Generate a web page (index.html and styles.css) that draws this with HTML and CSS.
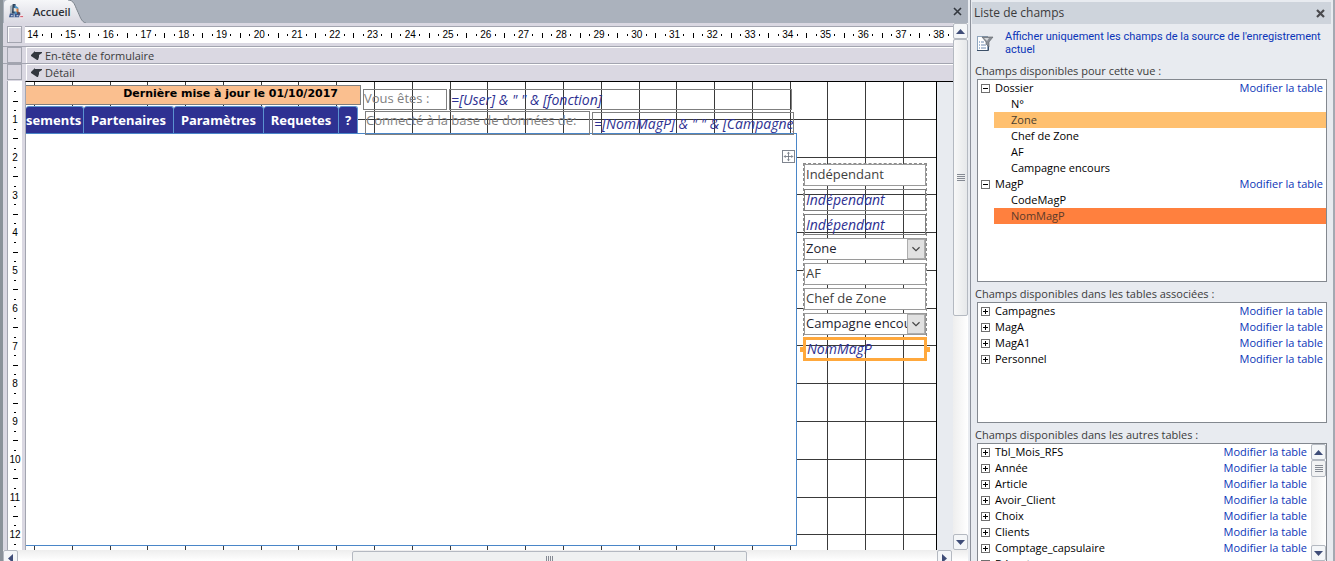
FILE: index.html
```html
<!DOCTYPE html>
<html lang="fr">
<head>
<meta charset="utf-8">
<title>Accueil</title>
<link rel="stylesheet" href="styles.css">
</head>
<body>
<main class="designer">
  <div class="tabbar">
    <div class="tab">
      <svg class="tab-shape" viewBox="0 0 82 23" aria-hidden="true">
        <defs><linearGradient id="tabfill" x1="0" y1="0" x2="0" y2="1"><stop offset="0" stop-color="#f6f7f9"/><stop offset="1" stop-color="#dad9e2"/></linearGradient></defs>
        <path d="M0 23V4Q0 0 4 0H64C70 0 71 6 73 10C76 16 77 22 82 23Z" fill="url(#tabfill)"/>
        <path d="M64 0C70 0 71 6 73 10C76 16 77 22 82 23" fill="none" stroke="#7d858e"/>
      </svg>
      <svg class="tab-icon" viewBox="0 0 16 16" aria-hidden="true">
        <path d="M1 2l4-2 1 10-5 2z" fill="#a9b3bd"/><path d="M4 0h3v10H3z" fill="#2f4660"/><path d="M6 1l4 3v7H6z" fill="#4d94c8"/><path d="M5 4l4 1v3H5z" fill="#e9e0d6"/><path d="M8 5h2v4H8z" fill="#e07b39"/><path d="M9 8l3 1v3H8z" fill="#5b4a58"/><path d="M1 10l11 1v3H0z" fill="#3b568c"/><path d="M2 12h2v1H2zM5 11h1v3H5zM8 12h2v1H8z" fill="#dfe6f0"/><circle cx="13" cy="13.500" r="2.200" fill="#f1e3e8"/><path d="M12 13h3v1h-3z" fill="#d0485c"/>
      </svg>
      <span>Accueil</span>
    </div>
    <button class="close" aria-label="Fermer"><svg viewBox="0 0 9 9"><path d="M1 1l7 7M8 1L1 8" stroke="#33383f" stroke-width="1.6"/></svg></button>
  </div>
  <div class="workspace">
    <div class="sheet">
      <div class="row ruler-row">
        <div class="selector"></div>
        <div class="hruler" id="hruler"></div>
      </div>
      <div class="row bar-row">
        <div class="selector small"></div>
        <div class="section-bar"><svg viewBox="0 0 11 9"><path d="M0 4L4 0V1H11V2L8 4V6L7 9H6L0 5Z" fill="#33383f"/></svg>En-tête de formulaire</div>
      </div>
      <div class="row bar-row">
        <div class="selector small"></div>
        <div class="section-bar"><svg viewBox="0 0 11 9"><path d="M0 4L4 0V1H11V2L8 4V6L7 9H6L0 5Z" fill="#33383f"/></svg>Détail</div>
      </div>
      <div class="row detail-row">
        <div class="vruler" id="vruler"></div>
        <div class="canvas">
          <div class="page">
            <div class="grid-cols" id="cols"></div>
            <div class="grid-rows" id="rows"></div>
            <div class="banner">Dernière mise à jour le 01/10/2017</div>
            <nav class="menu">
              <button class="cut">sements</button><button>Partenaires</button><button>Paramètres</button><button class="short">Requetes</button><button class="help">?</button>
            </nav>
            <div class="subform"></div>
            <label class="box user-label" for="user">Vous êtes :</label>
            <input class="box formula user" id="user" value="=[User] &amp; &quot; &quot; &amp; [fonction]">
            <label class="box base-label" for="base">Connecté à la base de données de:</label>
            <input class="box formula base" id="base" value="=[NomMagP] &amp; &quot; &quot; &amp; [Campagne]">
            <button class="move" aria-label="Déplacer"><svg viewBox="0 0 13 13"><path d="M6.500 1.500V11.500M1.500 6.500H11.500M5 3L6.500 1.500L8 3M5 10L6.500 11.500L8 10M3 5L1.500 6.500L3 8M10 5L11.500 6.500L10 8" fill="none" stroke="#6c727c"/></svg></button>
            <div class="stack">
              <input class="field" aria-label="Indépendant" value="Indépendant">
              <input class="field clear" aria-label="Indépendant 2" value="Indépendant">
              <input class="field clear low" aria-label="Indépendant 3" value="Indépendant">
              <div class="combo"><select class="field" aria-label="Zone"><option>Zone</option></select><svg viewBox="0 0 18 20"><path d="M5 8l4 4 4-4" fill="none" stroke="#444" stroke-width="1.3"/></svg></div>
              <input class="field" aria-label="AF" value="AF">
              <input class="field" aria-label="Chef de Zone" value="Chef de Zone">
              <div class="combo"><select class="field" aria-label="Campagne encours"><option>Campagne encours</option></select><svg viewBox="0 0 18 20"><path d="M5 8l4 4 4-4" fill="none" stroke="#444" stroke-width="1.3"/></svg></div>
              <div class="selected"><input class="field clear" aria-label="NomMagP" value="NomMagP"></div>
            </div>
          </div>
        </div>
      </div>
    </div>
    <div class="vscroll">
      <button class="arrow" aria-label="Haut"><svg viewBox="0 0 9 5"><path d="M0 5L4.500 0L9 5Z"/></svg></button>
      <div class="vthumb"><i class="grip"></i></div>
      <div class="vtrack"></div>
      <button class="arrow" aria-label="Bas"><svg viewBox="0 0 9 5"><path d="M0 0L4.500 5L9 0Z"/></svg></button>
    </div>
  </div>
  <div class="hscroll">
    <button class="arrow" aria-label="Gauche"><svg class="side" viewBox="0 0 5 9"><path d="M5 0L0 4.500L5 9Z"/></svg></button>
    <div class="htrack-a"></div>
    <div class="hthumb"><i class="grip upright"></i></div>
    <div class="htrack-b"></div>
    <button class="arrow" aria-label="Droite"><svg class="side" viewBox="0 0 5 9"><path d="M0 0L5 4.500L0 9Z"/></svg></button>
  </div>
</main>
<aside class="panel">
  <header class="panel-head"><span>Liste de champs</span><button class="close" aria-label="Fermer le volet"><svg viewBox="0 0 9 9"><path d="M1 1l7 7M8 1L1 8" stroke="#4a4a4e" stroke-width="2.200"/></svg></button></header>
  <div class="filter">
    <svg viewBox="0 0 17 17" aria-hidden="true"><rect x=".5" y="1.500" width="10" height="14" fill="#fff" stroke="#8fa5bd"/><path d="M0 15.500H11.500V10" fill="none" stroke="#3b4f68"/><path d="M2 7h1M2 10h1M2 13h1" stroke="#4a78b0"/><path d="M4 7h3M4 10h5M4 13h5" stroke="#6c88ad"/><path d="M5 2H16L12 7V12L9 9V7Z" fill="#8b9097" stroke="#5b6067" stroke-width=".6"/><path d="M7 3h5l-2 3z" fill="#d5d8db"/></svg>
    <a href="#">Afficher uniquement les champs de la source de l'enregistrement actuel</a>
  </div>
  <h2>Champs disponibles pour cette vue :</h2>
  <section class="list first">
    <div class="item"><button class="toggle minus" aria-label="Réduire"></button><span>Dossier</span><a href="#">Modifier la table</a></div>
    <div class="leaf">N°</div>
    <div class="leaf hot">Zone</div>
    <div class="leaf">Chef de Zone</div>
    <div class="leaf">AF</div>
    <div class="leaf">Campagne encours</div>
    <div class="item"><button class="toggle minus" aria-label="Réduire"></button><span>MagP</span><a href="#">Modifier la table</a></div>
    <div class="leaf">CodeMagP</div>
    <div class="leaf chosen">NomMagP</div>
  </section>
  <h2>Champs disponibles dans les tables associées :</h2>
  <section class="list second">
    <div class="item"><button class="toggle" aria-label="Développer"></button><span>Campagnes</span><a href="#">Modifier la table</a></div>
    <div class="item"><button class="toggle" aria-label="Développer"></button><span>MagA</span><a href="#">Modifier la table</a></div>
    <div class="item"><button class="toggle" aria-label="Développer"></button><span>MagA1</span><a href="#">Modifier la table</a></div>
    <div class="item"><button class="toggle" aria-label="Développer"></button><span>Personnel</span><a href="#">Modifier la table</a></div>
  </section>
  <h2>Champs disponibles dans les autres tables :</h2>
  <section class="list third">
    <div class="items">
      <div class="item"><button class="toggle" aria-label="Développer"></button><span>Tbl_Mois_RFS</span><a href="#">Modifier la table</a></div>
      <div class="item"><button class="toggle" aria-label="Développer"></button><span>Année</span><a href="#">Modifier la table</a></div>
      <div class="item"><button class="toggle" aria-label="Développer"></button><span>Article</span><a href="#">Modifier la table</a></div>
      <div class="item"><button class="toggle" aria-label="Développer"></button><span>Avoir_Client</span><a href="#">Modifier la table</a></div>
      <div class="item"><button class="toggle" aria-label="Développer"></button><span>Choix</span><a href="#">Modifier la table</a></div>
      <div class="item"><button class="toggle" aria-label="Développer"></button><span>Clients</span><a href="#">Modifier la table</a></div>
      <div class="item"><button class="toggle" aria-label="Développer"></button><span>Comptage_capsulaire</span><a href="#">Modifier la table</a></div>
      <div class="item"><button class="toggle" aria-label="Développer"></button><span>Départ</span></div>
    </div>
    <div class="vscroll">
      <button class="arrow" aria-label="Monter"><svg viewBox="0 0 9 5"><path d="M0 5L4.500 0L9 5Z"/></svg></button>
      <div class="mini-thumb"><i class="grip"></i></div>
      <div class="vtrack"></div>
      <button class="arrow" aria-label="Descendre"><svg viewBox="0 0 9 5"><path d="M0 0L4.500 5L9 0Z"/></svg></button>
    </div>
  </section>
</aside>
<script src="rulers.js"></script>
</body>
</html>
```
FILE: rulers.js
```js
// Rulers and grid are graduated in centimetres, four marks to each one.
function mark(parent, kind, text) {
  const el = document.createElement("span");
  el.className = "mark " + kind;
  if (text) el.textContent = text;
  parent.appendChild(el);
}
const h = document.getElementById("hruler");
for (let n = 14; n <= 38; n++) {
  mark(h, "num", String(n));
  mark(h, "dot");
  if (n < 38) {
    mark(h, "bar");
    mark(h, "dot");
  }
}
const v = document.getElementById("vruler");
for (let n = 0; n <= 12; n++) {
  if (n > 0) mark(v, "num", String(n));
  mark(v, "dot");
  mark(v, "bar");
  mark(v, "dot");
}
for (let n = 0; n < 24; n++) document.getElementById("cols").appendChild(document.createElement("i"));
for (let n = 0; n < 13; n++) document.getElementById("rows").appendChild(document.createElement("i"));
```
FILE: styles.css
```css
* { box-sizing: border-box; }
body {
  margin: 0;
  height: 100vh;
  display: flex;
  overflow: hidden;
  background: #e8ebf0;
  color: #3b3b3b;
  font: 11px/16px "Open Sans", "Noto Sans", sans-serif;
}
button, input, select { font: inherit; color: inherit; margin: 0; padding: 0; border: 0; border-radius: 0; background: none; }
svg { display: block; }
a { color: #0a35b8; text-decoration: none; }

.designer { flex: 1; min-width: 0; display: flex; flex-direction: column; border-left: 3px solid #8a9299; background: #dad8e2; }
.tabbar { height: 23px; flex: none; display: flex; justify-content: space-between; align-items: center; background: #abb2bd; padding: 0 4px 0 1px; }
.tab { position: relative; width: 82px; height: 23px; display: flex; align-items: center; gap: 9px; padding-left: 5px; font-weight: 600; color: #2e3137; }
.tab-shape { position: absolute; left: 0; top: 0; width: 82px; height: 23px; }
.tab-icon { position: relative; width: 15px; height: 15px; }
.tab span { position: relative; }
.close { width: 13px; height: 13px; display: grid; place-items: center; }
.close svg { width: 9px; height: 9px; }

.workspace { flex: 1; min-height: 0; display: flex; }
.sheet { flex: 1; min-width: 0; display: flex; flex-direction: column; padding-top: 3px; }
.row { display: flex; gap: 3px; padding-left: 4px; }
.ruler-row { height: 17px; margin-bottom: 3px; }
.selector { flex: none; width: 15px; border: 1px solid #a3a5b0; box-shadow: inset 1px 1px #fff; }
.hruler { flex: 1; min-width: 0; display: flex; align-items: center; overflow: hidden; background: #fff; border-top: 1px solid #a3a5b0; padding-left: 3px; }
.mark { flex: none; display: flex; align-items: center; justify-content: center; color: #000; font: 10px/10px "Liberation Sans", Arial, sans-serif; }
.hruler .mark { width: .25cm; }
.vruler .mark { height: .25cm; }
.mark::after { content: ""; background: #000; }
.num::after { display: none; }
.hruler .dot::after { width: 1px; height: 2px; }
.hruler .bar::after { width: 1px; height: 5px; }
.vruler .dot::after { width: 2px; height: 1px; }
.vruler .bar::after { width: 5px; height: 1px; }
.bar-row { height: 17px; border-top: 1px solid #a3a5b0; }
.selector.small { box-shadow: none; }
.section-bar { flex: 1; display: flex; align-items: center; gap: 3px; padding-left: 4px; border-top: 1px solid #fff; border-left: 1px solid #fff; margin-left: 1px; }
.section-bar svg { width: 11px; height: 9px; }
.detail-row { flex: 1; min-height: 0; margin-top: 1px; }
.vruler { flex: none; width: 15px; overflow: hidden; background: #fff; border-left: 1px solid #a3a5b0; padding-top: 6px; }
.canvas { flex: 1; min-width: 0; overflow: hidden; border-top: 1px solid #000; border-left: 1px solid #a3a5b0; background: #e8ebf0; }

/* Form surface: controls sit at free positions */
.page { position: relative; width: 911px; height: 100%; background: #fff; border-right: 1px solid #000; font-size: 13px; line-height: 19px; }
.grid-cols, .grid-rows { position: absolute; inset: 0; overflow: hidden; }
.grid-cols { display: flex; padding-left: 8px; }
.grid-cols i { flex: none; width: 1cm; border-left: 1px solid #3a3a3a; }
.grid-rows i { display: block; height: 1cm; border-bottom: 1px solid #3a3a3a; }
.banner { position: absolute; left: 0; top: 3px; width: 335px; height: 20px; padding-right: 22px; background: #fabf8f; border: 1px solid #7f7f7f; border-left: 0; text-align: right; font: bold 11px/16px "DejaVu Sans", sans-serif; color: #000; }
.menu { position: absolute; left: 0; top: 24px; height: 28px; display: flex; color: #fff; font-family: "Noto Sans", "Open Sans", sans-serif; font-weight: 700; }
.menu button { width: 90px; background: #2e3192; border-right: 1px solid #5b93d0; border-top: 1px solid #5b93d0; border-radius: 3px 3px 0 0; white-space: nowrap; }
.menu .cut { width: 58px; padding-right: 4px; text-align: right; }
.menu .short { width: 75px; }
.menu .help { width: 19px; }
.subform { position: absolute; left: 0; top: 51px; width: 771px; height: 413px; background: #fff; border: 1px solid #4a86c8; border-left: 0; }
.box { position: absolute; border: 1px solid #7f7f7f; color: #7f7f7f; white-space: nowrap; }
.formula { color: #2e3192; font-style: italic; font-size: 14px; padding-left: 1px; }
.user-label { left: 337px; top: 7px; width: 84px; height: 21px; line-height: 17px; }
.user { left: 423px; top: 7px; width: 343px; height: 21px; }
.base-label { left: 339px; top: 29px; width: 225px; height: 24px; line-height: 17px; }
.base { left: 566px; top: 30px; width: 202px; height: 23px; }
.move { position: absolute; left: 756px; top: 68px; width: 13px; height: 13px; border: 1px solid #7f858f; background: #fff; }
.stack { position: absolute; left: 777px; top: 81px; width: 124px; display: flex; flex-direction: column; gap: 3px; border: 1px dashed #8a8a8a; border-bottom: 0; }
.field { display: block; width: 100%; height: 22px; padding: 0 0 2px 1px; border: 1px solid #9a9a9a; background: #fff; color: #3f3f3f; }
.field.clear { background: none; border-color: #7f7f7f; color: #2e3192; font-style: italic; font-size: 14px; }
.field.low { height: 21px; padding-bottom: 0; }
.combo { position: relative; }
.combo .field { appearance: none; padding-right: 18px; color: #1f2430; }
.combo svg { position: absolute; right: 1px; top: 1px; width: 18px; height: 20px; background: #e1e1e1; border: 1px solid #adadad; pointer-events: none; }
.selected { margin: -1px -1px 0; border: 3px solid #ffa83c; position: relative; }
.selected .field { border: 0; height: 18px; }
.selected::before, .selected::after { content: ""; position: absolute; top: 7px; width: 5px; height: 5px; background: #ffa83c; }
.selected::before { left: -6px; }
.selected::after { right: -6px; }

/* Scroll bars */
.arrow { flex: none; width: 15px; height: 16px; display: grid; place-items: center; background: #f4f6f8; border: 1px solid #b4b9c1; border-radius: 2px; }
.arrow svg { width: 9px; height: 5px; fill: #3f4d78; }
.arrow .side { width: 5px; height: 9px; }
.vscroll { flex: none; width: 15px; display: flex; flex-direction: column; background: linear-gradient(90deg, #eee, #fff); }
.vthumb { flex: 275; display: grid; place-items: center; border: 1px solid #b4b9c1; border-radius: 2px; background: linear-gradient(90deg, #f8f8f8, #e6e8ea); }
.vtrack { flex: 218; }
.grip { width: 8px; height: 7px; background: repeating-linear-gradient(#858a93 0 1px, transparent 1px 2px); }
.grip.upright { width: 7px; height: 7px; background: repeating-linear-gradient(90deg, #858a93 0 1px, transparent 1px 2px); }
.hscroll { flex: none; height: 11px; display: flex; align-items: flex-start; overflow: hidden; padding-right: 16px; background: linear-gradient(#eee, #fff); }
.htrack-a { flex: 334; }
.hthumb { flex: 392; height: 16px; margin-top: 1px; display: grid; place-items: center; border: 1px solid #b4b9c1; border-radius: 2px; background: #eff1f1; }
.htrack-b { flex: 190; }

/* Field list */
.panel { flex: none; width: 365px; display: flex; flex-direction: column; padding: 2px 2px 0 1px; border-left: 1px solid #8c919b; border-right: 2px solid #a4a9b2; margin-left: 2px; }
.panel-head { display: flex; align-items: center; justify-content: space-between; height: 22px; padding: 0 4px 0 2px; background: #ced4dc; font-size: 12px; }
.filter { display: flex; gap: 11px; padding: 6px 10px 0 5px; height: 39px; font: 11px/13px Roboto, "Open Sans", sans-serif; }
.filter svg { flex: none; width: 17px; height: 17px; margin-top: 5px; }
.panel h2 { margin: 0; padding-left: 3px; font-size: 11px; font-weight: 400; line-height: 16px; white-space: nowrap; }
.list { margin: 0 4px 4px 5px; border: 1px solid #83888f; background: #fff; color: #000; overflow: hidden; flex: none; }
.first { height: 203px; }
.second { height: 121px; }
.third { flex: 1; min-height: 0; display: flex; margin-bottom: 0; border-bottom: 0; }
.items { flex: 1; min-width: 0; }
.item { height: 16px; display: flex; align-items: center; gap: 5px; padding: 0 3px; }
.items .item { padding-right: 4px; }
.item a { margin-left: auto; }
.item span { line-height: 14px; }
.toggle { width: 9px; height: 9px; border: 1px solid #6f6f6f; background: linear-gradient(#000, #000) center / 5px 1px no-repeat, linear-gradient(#000, #000) center / 1px 5px no-repeat; }
.toggle.minus { background: linear-gradient(#000, #000) center / 5px 1px no-repeat; }
.leaf { margin-left: 16px; padding-left: 17px; line-height: 16px; }
.hot { background: #ffc06f; color: #4a3f30; }
.chosen { background: #ff803e; color: #5a3a2a; }
.mini-thumb { flex: none; height: 17px; display: grid; place-items: center; border: 1px solid #b4b9c1; border-radius: 2px; background: #f1f2f3; }
```
